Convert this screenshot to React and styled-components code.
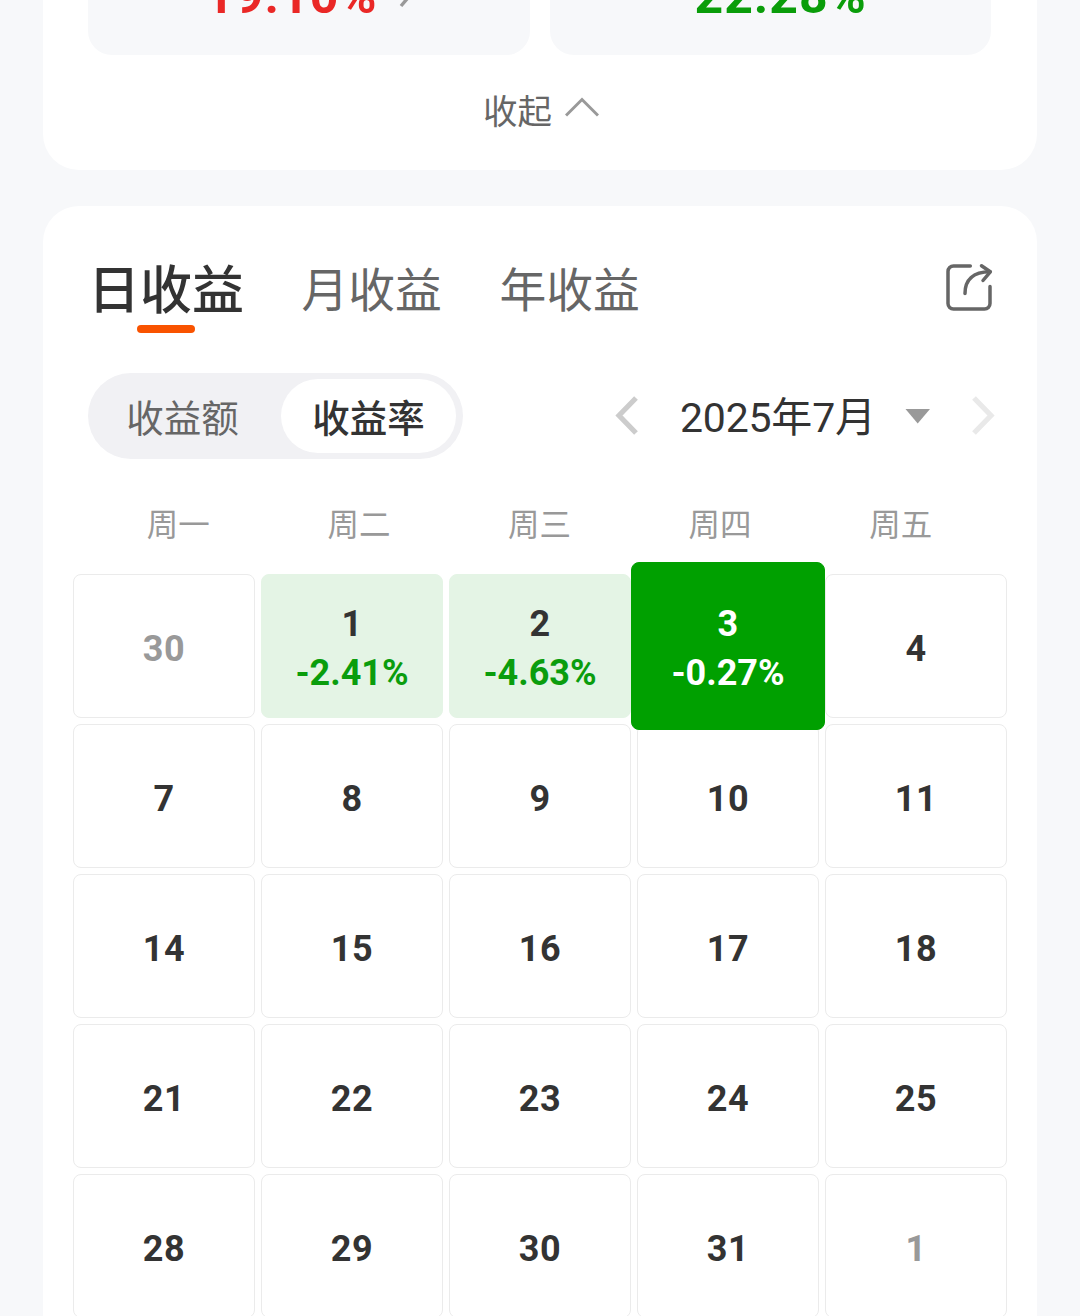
import React, { useState } from 'react';
import styled, { createGlobalStyle } from 'styled-components';

const GlobalStyle = createGlobalStyle`
  * {
    box-sizing: border-box;
  }

  body {
    margin: 0;
    background: #f7f8fa;
    font-family: Roboto, 'Noto Sans CJK SC', sans-serif;
    color: #333;
  }
`;

const Page = styled.div`
  width: 1080px;
  height: 1316px;
  padding: 0 43px;
  overflow: hidden;
`;

const SummaryCard = styled.section`
  height: 270px;
  margin-top: -100px;
  padding: 0 46px 0 45px;
  background: #fff;
  border-radius: 36px;
`;

const Tiles = styled.div`
  display: grid;
  grid-template-columns: 1fr 1fr;
  gap: 20px;
`;

const Tile = styled.div`
  height: 155px;
  padding-top: 66px;
  display: flex;
  justify-content: center;
  background: #f7f8fa;
  border-radius: 24px;
`;

const TileValue = styled.span`
  height: 60px;
  line-height: 60px;
  font-size: 50px;
  font-weight: 700;
  letter-spacing: 1px;
  color: ${({ color }) => color};
`;

const TileArrow = styled.svg`
  width: 18px;
  height: 36px;
  margin: 6px -5px 0 22px;
`;

const Collapse = styled.button`
  display: flex;
  align-items: center;
  justify-content: center;
  gap: 13px;
  width: 100%;
  height: 48px;
  margin-top: 30px;
  padding: 0 0 0 3px;
  border: 0;
  background: none;
  font: 400 34.5px/48px 'Noto Sans CJK SC', sans-serif;
  color: #666;

  svg {
    width: 34px;
    height: 20px;
    margin-bottom: 4px;
  }
`;

const CalendarCard = styled.section`
  height: 1200px;
  margin-top: 36px;
  padding-top: 44px;
  background: #fff;
  border-radius: 36px;
`;

const Tabs = styled.div`
  display: flex;
  height: 83px;
  padding: 0 43px 0 45px;
`;

const Tab = styled.button`
  display: flex;
  flex-direction: column;
  align-items: center;
  margin-right: 57.5px;
  padding: 0;
  border: 0;
  background: none;
  font-family: 'Noto Sans CJK SC', sans-serif;
  font-size: ${({ $active }) => ($active ? '52px' : '46.8px')};
  font-weight: ${({ $active }) => ($active ? 500 : 400)};
  line-height: 73px;
  color: ${({ $active }) => ($active ? '#333' : '#666')};

  &::after {
    content: '';
    width: 58px;
    height: 8px;
    margin-top: 2px;
    border-radius: 4px;
    background: ${({ $active }) => ($active ? '#f95300' : 'transparent')};
  }
`;

const ShareIcon = styled.svg`
  width: 50px;
  height: 50px;
  margin: 12px 0 0 auto;
`;

const Toolbar = styled.div`
  display: flex;
  align-items: center;
  justify-content: space-between;
  margin-top: 40px;
  padding: 0 42px 0 45px;
`;

const Segmented = styled.div`
  display: flex;
  gap: 11px;
  width: 375px;
  height: 86px;
  padding: 6px 7px;
  border-radius: 43px;
  background: #f1f1f4;
`;

const Segment = styled.button`
  flex: 1;
  padding: 0;
  border: 0;
  border-radius: 37px;
  background: ${({ $active }) => ($active ? '#fff' : 'transparent')};
  font: ${({ $active }) => ($active ? 500 : 400)} 37.5px/74px 'Noto Sans CJK SC', sans-serif;
  color: ${({ $active }) => ($active ? '#333' : '#666')};
`;

const MonthNav = styled.div`
  display: flex;
  align-items: center;
`;

const NavArrow = styled.svg`
  width: 24px;
  height: 40px;
`;

const Month = styled.span`
  width: 196px;
  margin-left: 41px;
  padding-top: 4px;
  font-size: 41px;
  line-height: 60px;
  letter-spacing: -0.2px;
  white-space: nowrap;
`;

const Caret = styled.svg`
  width: 25px;
  height: 15px;
  margin: 0 41px 0 29px;
`;

const Weekdays = styled.div`
  display: grid;
  grid-template-columns: repeat(5, 1fr);
  margin-top: 38px;
  padding: 0 46px 0 45px;
  font: 400 31.5px/50px 'Noto Sans CJK SC', sans-serif;
  text-align: center;
  color: #999;
`;

const Days = styled.div`
  display: grid;
  grid-template-columns: repeat(5, 182px);
  grid-auto-rows: 144px;
  gap: 6px;
  margin-top: 27px;
  padding: 0 30px;
`;

const palette = {
  plain: { bg: '#fff', border: '#ebebeb', day: '#333', rate: '#333' },
  muted: { bg: '#fff', border: '#ebebeb', day: '#999', rate: '#999' },
  loss: { bg: '#e4f4e5', border: '#e4f4e5', day: '#333', rate: '#0a9d0d' },
  selected: { bg: '#00a000', border: '#00a000', day: '#fff', rate: '#fff' },
};

const Day = styled.div`
  display: flex;
  flex-direction: column;
  align-items: center;
  justify-content: center;
  margin: ${({ $kind }) => ($kind === 'selected' ? '-12px -6px' : '0')};
  padding-top: 6px;
  border: 1px solid ${({ $kind }) => palette[$kind].border};
  border-radius: 8px;
  background: ${({ $kind }) => palette[$kind].bg};
  z-index: ${({ $kind }) => ($kind === 'selected' ? 1 : 0)};
  font-size: 36px;
  font-weight: 700;
  line-height: 49px;
  letter-spacing: 0.5px;
  color: ${({ $kind }) => palette[$kind].day};
`;

const Rate = styled.span`
  letter-spacing: 0;
  color: ${({ $kind }) => palette[$kind].rate};
`;

const tabs = ['日收益', '月收益', '年收益'];
const modes = ['收益额', '收益率'];
const weekdays = ['周一', '周二', '周三', '周四', '周五'];

const days = [
  { day: 30, kind: 'muted' },
  { day: 1, kind: 'loss', rate: '-2.41%' },
  { day: 2, kind: 'loss', rate: '-4.63%' },
  { day: 3, kind: 'selected', rate: '-0.27%' },
  ...[4, 7, 8, 9, 10, 11, 14, 15, 16, 17, 18, 21, 22, 23, 24, 25, 28, 29, 30, 31].map((day) => ({
    day,
    kind: 'plain',
  })),
  { day: 1, kind: 'muted' },
];

const App = () => {
  const [tab, setTab] = useState('日收益');
  const [mode, setMode] = useState('收益率');

  return (
    <Page>
      <GlobalStyle />
      <SummaryCard>
        <Tiles>
          <Tile>
            <TileValue color="#ea2826">19.10%</TileValue>
            <TileArrow viewBox="0 0 18 36" fill="none" stroke="#999" strokeWidth="3.4">
              <path d="M2 1l14 16.500L2 34" />
            </TileArrow>
          </Tile>
          <Tile>
            <TileValue color="#0a9d0a">-22.28%</TileValue>
          </Tile>
        </Tiles>
        <Collapse>
          收起
          <svg viewBox="0 0 34 20" fill="none" stroke="#999" strokeWidth="3">
            <path d="M1 18.500L17 2.500l16 16" />
          </svg>
        </Collapse>
      </SummaryCard>

      <CalendarCard>
        <Tabs>
          {tabs.map((name) => (
            <Tab key={name} $active={name === tab} onClick={() => setTab(name)}>
              {name}
            </Tab>
          ))}
          <ShareIcon
            viewBox="0 0 50 50"
            fill="none"
            stroke="#666"
            strokeWidth="3.5"
            strokeLinecap="round"
            strokeLinejoin="round"
          >
            <path d="M26.300 4H9.500a5.500 5.500 0 0 0-5.500 5.500v32a5.500 5.500 0 0 0 5.500 5.500H40.500a5.500 5.500 0 0 0 5.500-5.500V24.500" />
            <path d="M21 31.500C21 18 29 9.800 46 9.800" />
            <path d="M37.500 3.800L46.300 9.800l-7.300 8.700" />
          </ShareIcon>
        </Tabs>

        <Toolbar>
          <Segmented>
            {modes.map((name) => (
              <Segment key={name} $active={name === mode} onClick={() => setMode(name)}>
                {name}
              </Segment>
            ))}
          </Segmented>
          <MonthNav>
            <NavArrow viewBox="0 0 24 40" fill="none" stroke="#ccc" strokeWidth="5.2">
              <path d="M21 2L4 19.500 21 37" />
            </NavArrow>
            <Month>2025年7月</Month>
            <Caret viewBox="0 0 25 15" fill="#999">
              <path d="M0.500 0h24.500L12.700 14.500z" />
            </Caret>
            <NavArrow viewBox="0 0 24 40" fill="none" stroke="#e9e9e9" strokeWidth="5.2">
              <path d="M3 2L20 19.500 3 37" />
            </NavArrow>
          </MonthNav>
        </Toolbar>

        <Weekdays>
          {weekdays.map((name) => (
            <span key={name}>{name}</span>
          ))}
        </Weekdays>

        <Days>
          {days.map(({ day, kind, rate }, index) => (
            <Day key={index} $kind={kind}>
              <span>{day}</span>
              {rate && <Rate $kind={kind}>{rate}</Rate>}
            </Day>
          ))}
        </Days>
      </CalendarCard>
    </Page>
  );
};

export default App;
